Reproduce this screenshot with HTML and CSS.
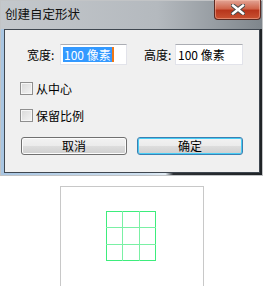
FILE: index.html
```html
<!DOCTYPE html>
<html>
<head>
  <meta charset="utf-8">
  <link rel="stylesheet" href="styles.css">
</head>
<body>
  <div class="window">
    <div class="titlebar">
      <span class="title">创建自定形状</span>
      <div class="close">
        <svg width="14" height="11" viewBox="0 0 14 11">
          <path d="M2 1.5 L12 9.5 M12 1.5 L2 9.5" stroke="#4a4a4a" stroke-width="4.4" stroke-linecap="square"/>
          <path d="M2 1.5 L12 9.5 M12 1.5 L2 9.5" stroke="#ffffff" stroke-width="2.4" stroke-linecap="square"/>
        </svg>
      </div>
    </div>

    <div class="panel">
      <div class="size-row">
        <label class="field-label">宽度:</label>
        <div class="textbox"><span class="selected">100 像素</span><span class="caret"></span></div>
        <label class="field-label field-label-h">高度:</label>
        <div class="textbox textbox-h">100 像素</div>
      </div>

      <div class="check-row first"><span class="check"></span>从中心</div>
      <div class="check-row"><span class="check"></span>保留比例</div>

      <div class="buttons">
        <div class="btn">取消</div>
        <div class="btn btn-default">确定</div>
      </div>
    </div>
  </div>

  <div class="preview">
    <svg class="grid" width="50" height="50" viewBox="0 0 50 50">
      <g stroke="#3ded7c" stroke-width="1" fill="none">
        <rect x="0.5" y="0.5" width="49" height="49"/>
        <path d="M16.5 0 V50 M33.5 0 V50 M0 16.5 H50 M0 33.5 H50" stroke="#7af0a4"/>
      </g>
    </svg>
  </div>
</body>
</html>
```

FILE: styles.css
```css
body {
  margin: 0;
  padding: 0;
  height: 286px;
  background: #ffffff;
  font-family: "Noto Sans CJK SC", "Liberation Sans", sans-serif;
  font-size: 12px;
  color: #000;
  overflow: hidden;
}

.window {
  width: 263px;
  height: 176px;
  box-sizing: border-box;
  border: 1px solid #c2c4c6;
  padding: 0 2px 2px 3px;
  background: linear-gradient(90deg, #a9c6e2 0%, #cfe0ef 55%, #e2ecf4 63%, #2c3034 66%, #1f2326 100%);
}

.titlebar {
  height: 28px;
  margin: 0 -2px 0 -3px;
  padding-left: 4px;
  display: flex;
  justify-content: space-between;
  align-items: flex-start;
  background: linear-gradient(90deg, #c4c8cc 0%, #b4b9be 60%, #7f868c 100%);
}

.title {
  padding-top: 5px;
  line-height: 16px;
  font-size: 12.5px;
  color: #101010;
}

.close {
  width: 47px;
  height: 20px;
  margin-top: -1px;
  margin-right: 1px;
  box-sizing: border-box;
  border: 1px solid #5b2a22;
  border-top: none;
  border-radius: 0 0 4px 4px;
  background: linear-gradient(180deg, #e2a596 0%, #d0664c 45%, #b8361c 55%, #c85232 100%);
  box-shadow: inset 0 0 0 1px rgba(255, 200, 180, 0.45);
  display: flex;
  align-items: center;
  justify-content: center;
}

.panel {
  height: 144px;
  box-sizing: border-box;
  border: 1px solid #3f4750;
  background: #f0f0f0;
  padding: 14px 0 0 15px;
}

.size-row {
  display: flex;
  align-items: center;
  height: 21px;
}

.field-label {
  width: 33px;
  margin-left: 7px;
  line-height: 16px;
}

.field-label-h {
  width: 31px;
  margin-left: 17px;
}

.textbox {
  width: 67px;
  height: 21px;
  box-sizing: border-box;
  border: 1px solid #e2e3ea;
  border-top-color: #abadb3;
  background: #fff;
  padding: 2px 0 0 2px;
  line-height: 15px;
  display: flex;
  align-items: flex-start;
}

.textbox-h {
  width: 68px;
}

.selected {
  background: #3399ff;
  color: #fff;
  padding: 0 1px;
}

.caret {
  width: 2px;
  height: 15px;
  background: #f07818;
}

.check-row {
  display: flex;
  align-items: center;
  gap: 3px;
  height: 13px;
  line-height: 13px;
  margin-top: 14px;
}

.check-row.first {
  margin-top: 17px;
}

.check {
  width: 13px;
  height: 13px;
  box-sizing: border-box;
  border: 1px solid #8f8f8f;
  background: linear-gradient(135deg, #d8d8d8 0%, #f4f4f4 100%);
  box-shadow: inset 0 0 0 1px #f6f6f6;
}

.buttons {
  display: flex;
  gap: 10px;
  margin-top: 15px;
  margin-left: 1px;
}

.btn {
  width: 106px;
  height: 18px;
  box-sizing: border-box;
  border: 1px solid #707070;
  border-radius: 3px;
  background: linear-gradient(180deg, #f2f2f2 0%, #ebebeb 50%, #dddddd 51%, #cfcfcf 100%);
  box-shadow: inset 0 0 0 1px #fcfcfc;
  text-align: center;
  line-height: 16px;
}

.btn-default {
  border-color: #3c7fb1;
  box-shadow: inset 0 0 0 1px #48cdf5;
}

.preview {
  width: 144px;
  height: 100px;
  box-sizing: border-box;
  margin: 10px 0 0 60px;
  border: 1px solid #c8c8c8;
  border-bottom: none;
  padding: 24px 0 0 45px;
}

.grid {
  display: block;
}
```
